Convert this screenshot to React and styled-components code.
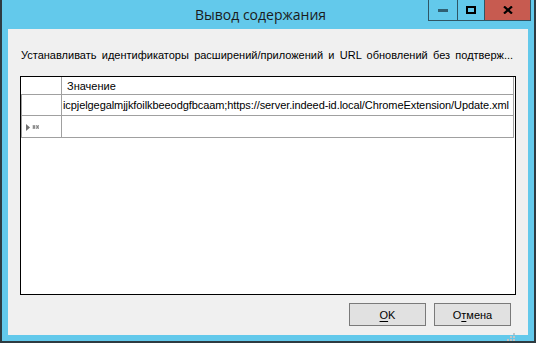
import React from 'react';
import styled, { createGlobalStyle } from 'styled-components';

const GlobalStyle = createGlobalStyle`
  html, body {
    margin: 0;
    padding: 0;
    background: #ffffff;
  }
  body {
    font-family: "Liberation Sans", Arial, sans-serif;
  }
`;

const Window = styled.div`
  box-sizing: border-box;
  width: 536px;
  height: 343px;
  display: flex;
  flex-direction: column;
  background: #63c9eb;
  border: 2px solid #2e3b41;
  border-top: none;
`;

const TitleBar = styled.div`
  display: grid;
  height: 31px;
  padding-right: 3px;
`;

const Title = styled.div`
  grid-area: 1 / 1;
  justify-self: center;
  align-self: start;
  margin-top: 5px;
  margin-left: -12px;
  font-family: "Open Sans", "Noto Sans", sans-serif;
  font-size: 14px;
  line-height: 20px;
  color: #1b1b1b;
`;

const Caption = styled.div`
  grid-area: 1 / 1;
  justify-self: end;
  align-self: start;
  display: flex;
  height: 21px;
  border: 1px solid #2f5665;
  border-top: none;
  box-sizing: border-box;
`;

const CaptionButton = styled.div`
  width: ${p => p.w}px;
  display: flex;
  align-items: center;
  justify-content: center;
  background: ${p => (p.close ? '#c75b50' : 'transparent')};
  & + & {
    border-left: 1px solid #2f5665;
  }
`;

const Client = styled.div`
  flex: 1;
  margin: 0 6px 6px 6px;
  background: #f0f0f0;
  display: flex;
  flex-direction: column;
  padding: 19px 12px 0 12px;
`;

const Label = styled.div`
  font-size: 11px;
  line-height: 14px;
  color: #000;
  padding-left: 1px;
  word-spacing: 2.2px;
  white-space: nowrap;
`;

const Grid = styled.div`
  margin-top: 14px;
  width: 496px;
  height: 219px;
  box-sizing: border-box;
  background: #ffffff;
  border: 1px solid #000;
  display: grid;
  grid-template-columns: 41px 1fr;
  grid-template-rows: 18px 21px 22px;
  align-content: start;
`;

const Cell = styled.div`
  box-sizing: border-box;
  border-right: 1px solid #a0a0a0;
  border-bottom: 1px solid #a0a0a0;
  border-left: ${p => (p.rowHead ? '1px solid #a0a0a0' : 'none')};
  margin-right: ${p => (p.last ? '1px' : '0')};
  font-size: 11px;
  color: #000;
  display: flex;
  align-items: center;
  padding-left: ${p => p.pad || 0}px;
  white-space: nowrap;
  overflow: hidden;
`;

const DataText = styled.span`
  letter-spacing: -0.08px;
`;

const Marker = styled.span`
  display: flex;
  align-items: center;
  gap: 1px;
  padding-left: 4px;
  padding-top: 1px;
`;

const Footer = styled.div`
  display: flex;
  justify-content: flex-end;
  gap: 8px;
  margin-top: 8px;
  padding-right: 5px;
`;

const Button = styled.div`
  box-sizing: border-box;
  width: 77px;
  height: 23px;
  background: #e1e1e1;
  border: 1px solid #7a7a7a;
  font-size: 11px;
  color: #000;
  display: flex;
  align-items: center;
  justify-content: center;
  u {
    text-decoration: underline;
    text-underline-offset: 2px;
  }
`;

const Grip = styled.div`
  align-self: flex-end;
  margin-top: 1px;
  margin-right: 1px;
  width: 8px;
  height: 8px;
`;

function SizeGrip() {
  const dots = [
    [6, 0], [6, 3], [3, 3], [6, 6], [3, 6], [0, 6],
  ];
  return (
    <Grip>
      <svg width="8" height="8" viewBox="0 0 8 8">
        {dots.map(([x, y]) => (
          <rect key={`${x}-${y}`} x={x} y={y} width="2" height="2" fill="#c4c4c4" />
        ))}
      </svg>
    </Grip>
  );
}

function NewRowMarker() {
  return (
    <Marker>
      <svg width="13" height="7" viewBox="0 0 13 7">
        <path d="M0 0 L4 3.5 L0 7 Z" fill="#707070" />
        <path
          d="M7 1 L9 5 M9 1 L7 5 M6.5 3 L9.5 3 M10.5 1 L12.5 5 M12.5 1 L10.5 5 M10 3 L13 3"
          stroke="#808080"
          strokeWidth="1"
        />
      </svg>
    </Marker>
  );
}

export default function App() {
  return (
    <>
      <GlobalStyle />
      <Window>
        <TitleBar>
          <Title>Вывод содержания</Title>
          <Caption>
            <CaptionButton w={28}>
              <svg width="10" height="3">
                <rect width="10" height="3" fill="#2f5f73" />
              </svg>
            </CaptionButton>
            <CaptionButton w={26}>
              <svg width="10" height="8">
                <rect x="1" y="1" width="8" height="6" fill="none" stroke="#000" strokeWidth="2" />
              </svg>
            </CaptionButton>
            <CaptionButton w={45} close>
              <svg width="10" height="8" viewBox="0 0 10 8">
                <path d="M1 0.5 L9 7.5 M9 0.5 L1 7.5" stroke="#000" strokeWidth="2.2" />
              </svg>
            </CaptionButton>
          </Caption>
        </TitleBar>
        <Client>
          <Label>
            Устанавливать идентификаторы расширений/приложений и URL обновлений без подтверж...
          </Label>
          <Grid>
            <Cell />
            <Cell pad={5} last>Значение</Cell>
            <Cell rowHead />
            <Cell pad={1} last>
              <DataText>
                icpjelgegalmjjkfoilkbeeodgfbcaam;https://server.indeed-id.local/ChromeExtension/Update.xml
              </DataText>
            </Cell>
            <Cell rowHead>
              <NewRowMarker />
            </Cell>
            <Cell last />
          </Grid>
          <Footer>
            <Button>
              <span><u>O</u>K</span>
            </Button>
            <Button>
              <span>О<u>т</u>мена</span>
            </Button>
          </Footer>
          <SizeGrip />
        </Client>
      </Window>
    </>
  );
}
